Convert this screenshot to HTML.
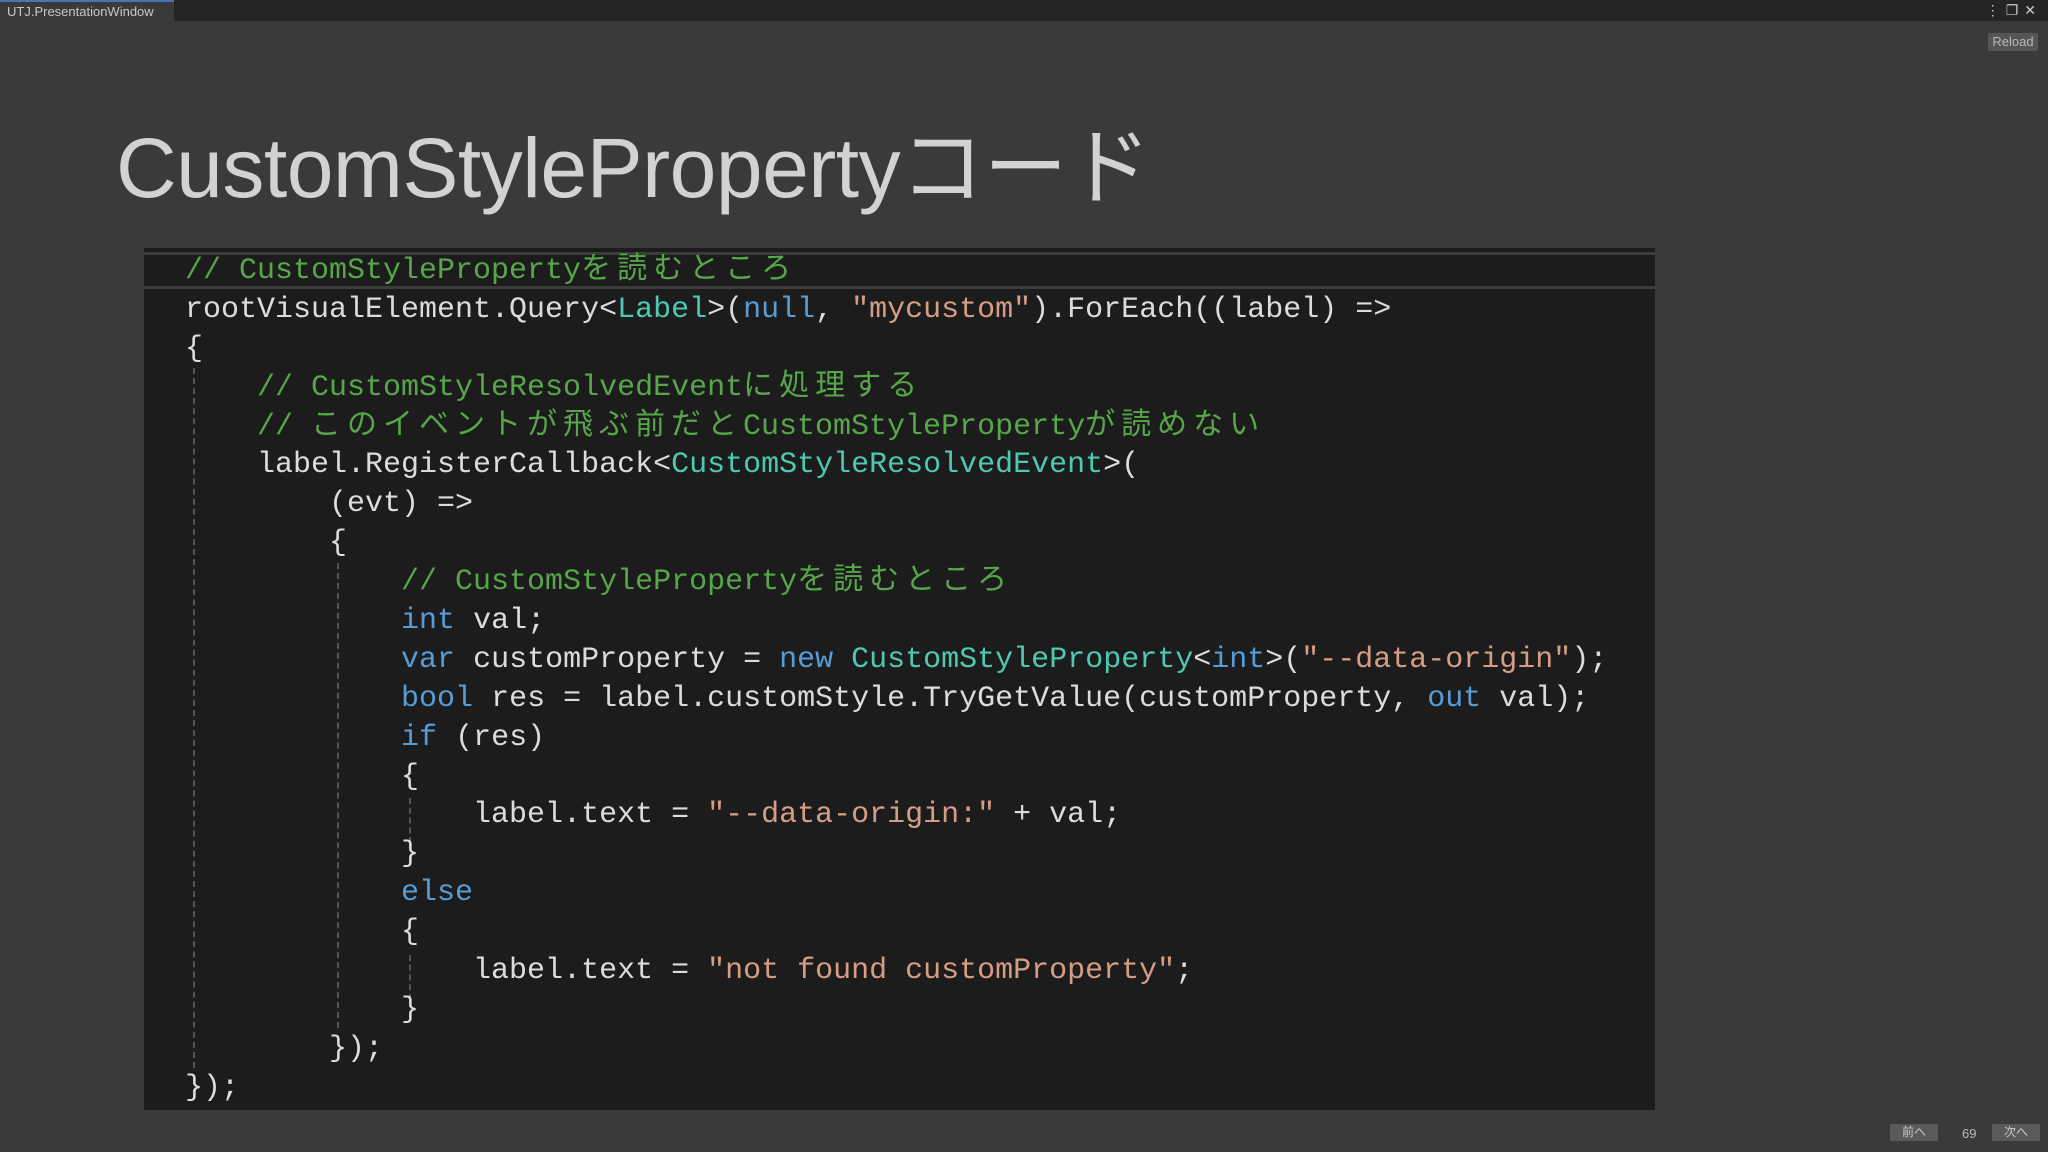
<!DOCTYPE html>
<html><head><meta charset="utf-8"><style>
*{margin:0;padding:0;box-sizing:border-box}
html,body{width:2048px;height:1152px;overflow:hidden}
body{background:#393a3a;position:relative;font-family:"Liberation Sans","Noto Sans CJK JP",sans-serif}
.top{position:absolute;left:0;top:0;width:2048px;height:21px;background:#252525}
.tab{position:absolute;left:0;top:0;width:174px;height:21px;background:#3a3a3a;border-top:2px solid #4a74b0;color:#c8c8c8;font-size:13px;line-height:19px;padding-left:7px}
.icons{position:absolute;right:6px;top:2px;color:#ccc;font-size:14px;letter-spacing:6px}
.reload{position:absolute;left:1988px;top:33px;width:50px;height:18px;background:#555;border-radius:2px;color:#bbb;font-size:13px;line-height:18px;text-align:center}
h1{position:absolute;left:116px;top:118px;font-weight:normal;font-size:84px;color:#d2d2d2;letter-spacing:-0.5px;line-height:100px;white-space:nowrap}
.code{position:absolute;left:144px;top:248px;width:1511px;height:862px;background:#1c1c1c;overflow:hidden}
.hl{position:absolute;left:0;top:4px;width:1511px;height:37px;border-top:3px solid #3c3c3c;border-bottom:3px solid #3c3c3c}
.lines{position:absolute;left:41px;top:4px;font-family:"Liberation Mono","Noto Sans CJK JP",monospace;font-size:30px;color:#dcdcdc}
.lines div{height:38.9px;line-height:38.9px;white-space:pre}
.j{letter-spacing:6px}
.c{color:#57a64a}.k{color:#569cd6}.t{color:#4ec9b0}.s{color:#d69d85}
.g{position:absolute;border-left:2px dashed #555;width:0}
.nav{position:absolute;top:1124px;height:17px;background:#5a5a5a;color:#ccc;font-size:12px;line-height:17px;text-align:center;width:48px}
.pg{position:absolute;left:1962px;top:1126px;color:#bbb;font-size:13px}
</style></head><body>
<div class="top"><div class="tab">UTJ.PresentationWindow</div><div class="icons">⋮❐✕</div></div>
<div class="reload">Reload</div>
<h1>CustomStylePropertyコード</h1>
<div class="code">
<div class="hl"></div>
<div class="g" style="left:49px;top:120px;height:700px"></div>
<div class="g" style="left:193px;top:315px;height:465px"></div>
<div class="g" style="left:265px;top:550px;height:45px"></div>
<div class="g" style="left:265px;top:707px;height:45px"></div>
<div class="lines"><div class="c">// CustomStyleProperty<span class="j">を読むところ</span></div><div>rootVisualElement.Query&lt;<span class="t">Label</span>&gt;(<span class="k">null</span>, <span class="s">"mycustom"</span>).ForEach((label) =&gt;</div><div>{</div><div class="c">    // CustomStyleResolvedEvent<span class="j">に処理する</span></div><div class="c">    // <span class="j">このイベントが飛ぶ前だと</span>CustomStyleProperty<span class="j">が読めない</span></div><div>    label.RegisterCallback&lt;<span class="t">CustomStyleResolvedEvent</span>&gt;(</div><div>        (evt) =&gt;</div><div>        {</div><div class="c">            // CustomStyleProperty<span class="j">を読むところ</span></div><div>            <span class="k">int</span> val;</div><div>            <span class="k">var</span> customProperty = <span class="k">new</span> <span class="t">CustomStyleProperty</span>&lt;<span class="k">int</span>&gt;(<span class="s">"--data-origin"</span>);</div><div>            <span class="k">bool</span> res = label.customStyle.TryGetValue(customProperty, <span class="k">out</span> val);</div><div>            <span class="k">if</span> (res)</div><div>            {</div><div>                label.text = <span class="s">"--data-origin:"</span> + val;</div><div>            }</div><div>            <span class="k">else</span></div><div>            {</div><div>                label.text = <span class="s">"not found customProperty"</span>;</div><div>            }</div><div>        });</div><div>});</div></div>
</div>
<div class="nav" style="left:1890px">前へ</div>
<div class="pg">69</div>
<div class="nav" style="left:1992px">次へ</div>
</body></html>
